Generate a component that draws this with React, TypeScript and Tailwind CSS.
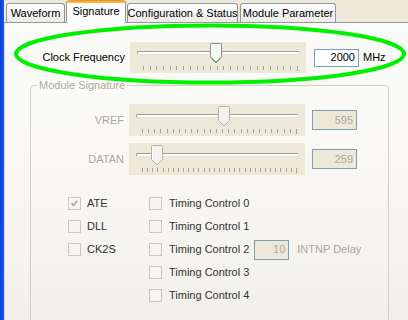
import React from "react";

type SliderProps = {
    thumbLeft: number;
    ticks: number;
    tall?: boolean;
    active?: boolean;
};

function Thumb({ active, left, top }: { active?: boolean; left: number; top: string }) {
    return (
        <svg
            width="12"
            height="21"
            viewBox="0 0 12 21"
            className={`absolute ${top}`}
            style={{ left }}
        >
            <path
                d="M1.5 0.5 H10.5 Q11.5 0.5 11.5 1.5 V14.5 L6 20 L0.5 14.5 V1.5 Q0.5 0.5 1.5 0.5 Z"
                fill={active ? "#F7F7F4" : "#F3F2EC"}
                stroke={active ? "#8E8F8F" : "#B4B2A8"}
            />
            {active && (
                <path d="M1.5 14.5 L6 19 L10.5 14.5" fill="none" stroke="#5EAF5E" strokeWidth="1" />
            )}
            <path d="M1.5 2 V14" stroke="#FFFFFF" />
        </svg>
    );
}

function Slider({ thumbLeft, ticks, tall, active }: SliderProps) {
    return (
        <div
            className={`relative w-[176px] bg-[#ECE9D8] ${tall ? "h-[32px] pt-[10px]" : "h-[31px] pt-[9px]"}`}
        >
            {/* track */}
            <div className="ml-[7px] w-[163px] h-[4px] rounded-[2px] border border-t-[#9D9C96] border-l-[#9D9C96] border-b-[#E2E0D6] border-r-[#E2E0D6] bg-white" />
            {/* ticks */}
            <div className="ml-[13px] w-[155px] mt-[11px] flex justify-between items-start">
                {Array.from({ length: ticks }).map((_, i) => (
                    <div
                        key={i}
                        className={`w-px bg-[#A4A297] ${i === ticks - 1 ? "h-[5px]" : "h-[4px]"}`}
                    />
                ))}
            </div>
            <Thumb active={active} left={thumbLeft} top={tall ? "top-[2px]" : "top-[1px]"} />
        </div>
    );
}

function Check({ checked }: { checked?: boolean }) {
    return (
        <div className="w-[13px] h-[13px] border border-[#CAC8BB] bg-[#F5F4EF] flex items-center justify-center">
            {checked && (
                <svg width="9" height="9" viewBox="0 0 9 9">
                    <path d="M1.5 4 L3.5 6.2 L7.5 1.8" fill="none" stroke="#A9A698" strokeWidth="1.6" />
                </svg>
            )}
        </div>
    );
}

export default function App() {
    const col1 = [
        { label: "ATE", checked: true },
        { label: "DLL" },
        { label: "CK2S" },
    ];
    const col2 = ["Timing Control 0", "Timing Control 1", "Timing Control 2", "Timing Control 3", "Timing Control 4"];

    return (
        <div className="relative w-[408px] h-[320px] overflow-hidden flex font-['Liberation_Sans',Arial,sans-serif] text-[11px] text-black whitespace-nowrap">
            {/* window frame edge */}
            <div className="w-[4px] bg-linear-to-r from-[#0A3DD0] to-[#1C5AF0]" />

            <div className="flex-1 flex flex-col bg-[#ECE9D8]">
                {/* Tabs */}
                <div className="h-[22px] flex items-end pl-[2px] relative z-10">
                    <div className="w-[59px] h-[19px] border border-b-0 border-[#919B9C] rounded-t-[3px] bg-linear-to-b from-white to-[#ECEBE6] flex items-center justify-center">
                        Waveform
                    </div>
                    <div className="ml-[1px] w-[60px] h-[23px] mb-[-1px] border-x border-[#919B9C] rounded-t-[3px] bg-[#FCFCFE] flex flex-col">
                        <div className="h-[3px] rounded-t-[3px] bg-linear-to-b from-[#E68B2C] to-[#FFC73C]" />
                        <div className="flex-1 flex items-center justify-center pb-[3px]">Signature</div>
                    </div>
                    <div className="ml-[1px] w-[111px] h-[19px] border border-b-0 border-[#919B9C] rounded-t-[3px] bg-linear-to-b from-white to-[#ECEBE6] flex items-center justify-center">
                        Configuration &amp; Status
                    </div>
                    <div className="ml-[2px] w-[96px] h-[19px] border border-b-0 border-[#919B9C] rounded-t-[3px] bg-linear-to-b from-white to-[#ECEBE6] flex items-center justify-center">
                        Module Parameter
                    </div>
                </div>

                {/* Page body */}
                <div className="flex-1 border-t border-l border-t-[#919B9C] border-l-[#D6D3C8] bg-linear-to-b from-[#FBFBF9] via-[#F8F7F3] to-[#EFEEE8] pt-[19px]">
                    {/* Clock frequency */}
                    <div className="flex items-center">
                        <div className="w-[120px] text-right">Clock Frequency</div>
                        <div className="ml-[5px]">
                            <Slider thumbLeft={80} ticks={24} active />
                        </div>
                        <div className="ml-[8px] w-[45px] h-[18px] border border-[#7F9DB9] bg-white flex items-center justify-end pr-[3px]">
                            2000
                        </div>
                        <div className="ml-[4px]">MHz</div>
                    </div>

                    {/* Module Signature group */}
                    <div className="relative ml-[25px] mt-[12px] w-[359px] h-[260px] border border-[#D0D0BF] rounded-[4px] pt-[18px] text-[#ACA899]">
                        <span className="absolute left-[6px] top-[-8px] px-[2px] bg-[#FBFBF9] leading-[14px]">
                            Module Signature
                        </span>

                        <div className="flex items-center">
                            <div className="w-[93px] text-right">VREF</div>
                            <div className="ml-[5px]">
                                <Slider thumbLeft={89} ticks={26} tall />
                            </div>
                            <div className="ml-[7px] w-[45px] h-[20px] border border-[#7F9DB9] bg-[#ECE9D8] flex items-center justify-end pr-[3px]">
                                595
                            </div>
                        </div>

                        <div className="flex items-center mt-[7px]">
                            <div className="w-[93px] text-right">DATAN</div>
                            <div className="ml-[5px]">
                                <Slider thumbLeft={22} ticks={31} tall />
                            </div>
                            <div className="ml-[7px] w-[45px] h-[20px] border border-[#7F9DB9] bg-[#ECE9D8] flex items-center justify-end pr-[3px]">
                                259
                            </div>
                        </div>

                        {/* Checkboxes */}
                        <div className="flex mt-[17px] ml-[37px] text-[#333333]">
                            <div className="w-[81px] flex flex-col">
                                {col1.map((c) => (
                                    <div key={c.label} className="h-[23px] flex items-center">
                                        <Check checked={c.checked} />
                                        <span className="ml-[6px]">{c.label}</span>
                                    </div>
                                ))}
                            </div>
                            <div className="flex flex-col">
                                {col2.map((label, i) => (
                                    <div key={label} className="h-[23px] flex items-center">
                                        <Check />
                                        <span className="ml-[7px]">{label}</span>
                                        {i === 2 && (
                                            <>
                                                <div className="ml-[5px] w-[35px] h-[20px] border border-[#7F9DB9] bg-[#ECE9D8] flex items-center justify-end pr-[3px] text-[#ACA899]">
                                                    10
                                                </div>
                                                <span className="ml-[8px] text-[#ACA899]">INTNP Delay</span>
                                            </>
                                        )}
                                    </div>
                                ))}
                            </div>
                        </div>
                    </div>
                </div>
            </div>

            {/* highlight ellipse drawn over the screenshot */}
            <svg className="absolute left-0 top-0 pointer-events-none" width="408" height="320">
                <ellipse cx="210" cy="54" rx="194" ry="28.5" fill="none" stroke="#00F000" strokeWidth="4" />
            </svg>
        </div>
    );
}
